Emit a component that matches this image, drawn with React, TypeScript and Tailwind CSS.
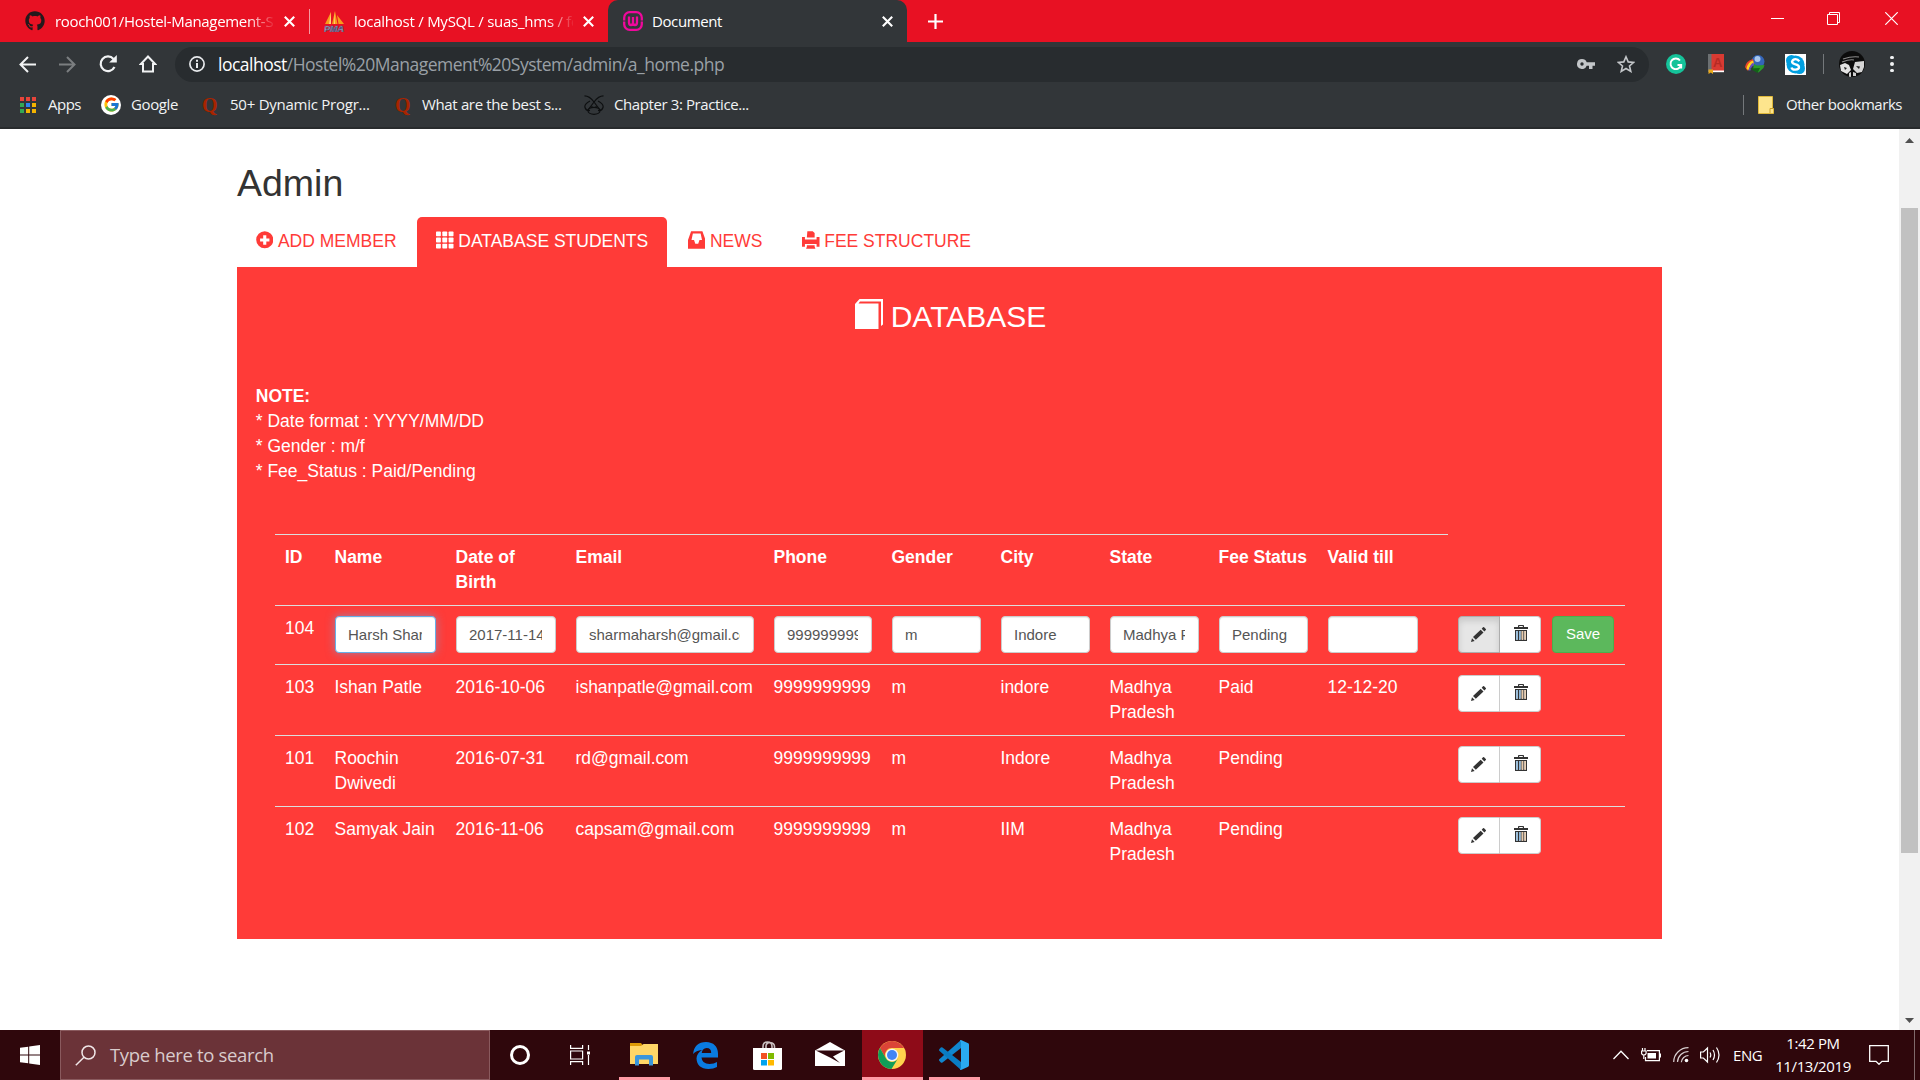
import React from "react";
import { FaGithub } from "react-icons/fa";
import { FcGoogle } from "react-icons/fc";

const ui = "font-['Open_Sans','Noto_Sans',sans-serif]";

/* ---------- page glyphs ---------- */

const PlusSign = () => (
  <svg viewBox="0 0 18 18" className="h-[18px] w-[17.5px] shrink-0" fill="currentColor">
    <path fillRule="evenodd" d="M9 0a8.800 8.800 0 1 0 0 17.600A8.800 8.800 0 0 0 9 0ZM7.4 4.2h3.2v3.2h3.2v3.2h-3.2v3.2H7.4v-3.2H4.2V7.4h3.2Z" />
  </svg>
);
const GridGlyph = () => (
  <svg viewBox="0 0 18 18" className="h-[18px] w-[17.5px] shrink-0" fill="currentColor">
    {[0.2, 6.5, 12.8].map((y) => [0, 6.5, 13].map((x) => <rect key={`${x}-${y}`} x={x} y={y} width="5" height="5" rx="0.8" />))}
  </svg>
);
const InboxGlyph = () => (
  <svg viewBox="0 0 18 18" className="h-[18px] w-[17.5px] shrink-0" fill="currentColor">
    <path fillRule="evenodd" d="M3.200 0h11.600L18 9V18H0V9ZM5 2.400 3.600 9H6.200l1.300 3.800h3L11.800 9h2.600L13 2.400Z" />
  </svg>
);
const PrintGlyph = () => (
  <svg viewBox="0 0 18 18" className="h-[18px] w-[17.5px] shrink-0" fill="currentColor">
    <path d="M5.500 0h5.500L13 1.800V6.500H5ZM0 6h3v2.500h12V6h3v10h-3v-3H3v3H0ZM5 14.500h8v1.500l.8 2H4.200l.8-2Z" />
  </svg>
);
const BookGlyph = () => (
  <svg viewBox="0 0 28 30" className="h-[30px] w-[28px] shrink-0" fill="currentColor">
    <path d="M4.500 0H28v25.500L26 27V2.500H5L3.500 4.500H23.500V30H0V5Z" />
  </svg>
);
const PencilGlyph = () => (
  <svg viewBox="0 0 16 16" className="h-4 w-4" fill="#333">
    <path d="M0 16l1-3.700L3.700 15ZM2 11l7.700-7.300 2.800 2.700L4.800 13.800ZM10.700 2.800l1.300-1.500q.5-.6 1.100 0l1.700 1.700q.5.600 0 1.100l-1.400 1.400Z" />
  </svg>
);
const TrashGlyph = () => (
  <svg viewBox="0 0 14 16" className="h-4 w-[14px]" fill="#333">
    <path fillRule="evenodd" d="M4 2V.8Q4 0 4.800 0h4.400Q10 0 10 .8V2h4v2H0V2ZM5.200 2h3.600V1.100H5.200ZM1 5h12v11H1Zm1.200 1v8.800h1.600V6Zm2.800 0v8.800h1.500V6Zm2.700 0v8.800h1.500V6Zm2.700 0v8.800h1.500V6Z" />
    <path d="M2.300 6h1.500v8.800H2.300ZM5 6h1.500v8.800H5Z" fill="#8cb8dc" />
    <path d="M7.700 6h1.500v8.800H7.700ZM10.400 6h1.400v8.800h-1.400Z" fill="#e8c9a8" />
  </svg>
);

/* ---------- browser chrome ---------- */

const CloseX = ({ className }: { className: string }) => (
  <svg viewBox="0 0 11 11" className={`h-[11px] w-[11px] shrink-0 ${className}`} stroke="#fff" strokeWidth="2.1">
    <path d="M.8.8l9.400 9.400M10.200.8.8 10.200" />
  </svg>
);

const TabStrip = () => (
  <div className={`flex h-[42px] shrink-0 bg-[#e81123] text-[15px] text-white ${ui}`}>
    <div className="flex w-[309px] items-center pl-[25px]">
      <FaGithub className="h-[20px] w-[20px] shrink-0 text-[#24191c]" />
      <div className="ml-[10px] w-[219px] whitespace-nowrap tracking-[-0.32px] [mask-image:linear-gradient(to_right,black_88%,transparent_101%)]">
        rooch001/Hostel-Management-S
      </div>
      <CloseX className="ml-[10px]" />
    </div>
    <div className="flex w-[299px] items-center">
      <div className="h-[25px] w-px bg-[#f59aa1]" />
      <svg viewBox="0 0 21 21" className="ml-[14px] h-[21px] w-[21px] shrink-0">
        <path d="M7 1 1 13h6ZM11 0 8 13h5.500ZM13 4l1.500 9H20Z" fill="#f99c1b" />
        <path d="M7 1 5 13h2ZM11 0v13h-1Z" fill="#ffd27a" />
        <text x="0" y="20.500" fontSize="9" fontWeight="700" fontStyle="italic" fontFamily="Liberation Sans" fill="#c9c9dc" stroke="#55567f" strokeWidth=".7" textLength="20">PMA</text>
      </svg>
      <div className="ml-[9px] w-[219px] whitespace-nowrap tracking-[-0.25px] [mask-image:linear-gradient(to_right,black_88%,transparent_101%)]">
        localhost / MySQL / suas_hms / fe
      </div>
      <CloseX className="ml-[10px]" />
    </div>
    <div className="flex w-[299px] bg-[#323639]">
      <div className="flex-1 rounded-b-[10px] bg-[#e81123]">
        <div className="flex h-full items-center rounded-t-[10px] bg-[#323639] pl-[15px]">
          <svg viewBox="0 0 20 20" className="h-5 w-5 shrink-0" fill="none" stroke="#f0089c" strokeWidth="2.300">
            <rect x="1.200" y="1.200" width="17.600" height="17.600" rx="5.500" />
            <path d="M6 5.500v6q0 2.500 2 2.500t2-2.500V6v5.500q0 2.500 2 2.500t2-2.500v-6" />
            <path d="M0 10h4M16 10h4" stroke="#323639" strokeWidth="1.200" />
          </svg>
          <div className="ml-[9px] w-[220px] tracking-[-0.4px]">Document</div>
          <CloseX className="ml-[10px]" />
        </div>
      </div>
    </div>
    <div className="flex flex-1 items-center">
      <svg viewBox="0 0 15 15" className="ml-[21px] h-[15px] w-[15px]" stroke="#fff" strokeWidth="2.200"><path d="M7.500 0v15M0 7.500h15" /></svg>
      <div className="mb-[5px] ml-auto flex items-center pr-[22px]">
        <div className="h-px w-[13px] bg-white" />
        <svg viewBox="0 0 13 13" className="ml-[43px] h-[13px] w-[13px]" fill="none" stroke="#fff"><path d="M.5 2.500h10v10H.5ZM2.500 2V.5h10v10H11" /></svg>
        <svg viewBox="0 0 13 13" className="ml-[45px] h-[13px] w-[13px]" stroke="#fff" strokeWidth="1.200"><path d="M.3.3l12.400 12.400M12.700.3.3 12.700" /></svg>
      </div>
    </div>
  </div>
);

const Toolbar = () => (
  <div className={`flex h-[44px] shrink-0 items-center bg-[#323639] ${ui}`}>
    <svg viewBox="0 0 17 17" className="ml-[19px] h-[17px] w-[17px]" fill="none" stroke="#f1f3f4" strokeWidth="2"><path d="M17 8.500H1.500M9 1 1.500 8.500 9 16" /></svg>
    <svg viewBox="0 0 17 17" className="ml-[23px] h-[17px] w-[17px]" fill="none" stroke="#7b7e80" strokeWidth="2"><path d="M0 8.500h15.500M8 1l7.500 7.500L8 16" /></svg>
    <svg viewBox="0 0 18 18" className="ml-[23px] h-[18px] w-[18px]" fill="none" stroke="#f1f3f4" strokeWidth="2.200">
      <path d="M15.500 12A7.300 7.300 0 1 1 14.500 4" />
      <path d="M17.800 0v7.600h-7.600Z" fill="#f1f3f4" stroke="none" />
    </svg>
    <svg viewBox="0 0 18 18" className="ml-[22px] h-[18px] w-[18px]" fill="none" stroke="#f1f3f4" strokeWidth="2"><path d="M9 1.500 1.800 9H4v7.600h10V9h2.200Z" /></svg>
    <div className="ml-[18px] flex h-[35px] w-[1474px] items-center rounded-full bg-[#282c2f] pl-[14px]">
      <svg viewBox="0 0 16 16" className="h-4 w-4" fill="none" stroke="#e8eaed" strokeWidth="1.700"><circle cx="8" cy="8" r="7.100" /><path d="M8 7v5M8 3.800v1.900" strokeWidth="2" /></svg>
      <div className="ml-[13px] whitespace-nowrap text-[17.500px] tracking-[-0.51px] text-[#9aa0a6]"><span className="text-white">localhost</span>/Hostel%20Management%20System/admin/a_home.php</div>
      <svg viewBox="0 0 18 10" className="ml-auto h-[10px] w-[18px]" fill="#c3c6c9"><path fillRule="evenodd" d="M5 0a5 5 0 1 0 4.700 6.700H12V10h3.500V6.700H18V3.300H9.700A5 5 0 0 0 5 0Zm0 3.300a1.700 1.700 0 1 1 0 3.400 1.700 1.700 0 0 1 0-3.400Z" /></svg>
      <svg viewBox="0 0 18 18" className="ml-[22px] mr-[14px] h-[18px] w-[18px]" fill="none" stroke="#c3c6c9" strokeWidth="1.600"><path d="m9 1.800 2.200 5.100 5.500.5-4.200 3.600 1.300 5.400L9 13.500l-4.800 2.900L5.500 11 1.300 7.400l5.500-.5Z" /></svg>
    </div>
    <svg viewBox="0 0 20 20" className="ml-[17px] h-5 w-5"><circle cx="10" cy="10" r="10" fill="#15c39a" /><path d="M14 6.500A5.300 5.300 0 1 0 15 11h-3.500M15.200 10.200v4.300" fill="none" stroke="#fff" strokeWidth="1.900" /></svg>
    <svg viewBox="0 0 18 20" className="ml-[21px] h-5 w-[18px]">
      <rect x="1" width="16" height="18" fill="#d93a32" /><rect x="1" width="3.500" height="18" fill="#6c7072" /><path d="M5 16.500h12v1.700H5Z" fill="#fff" />
      <text x="6" y="13" fontSize="13" fontWeight="700" fontFamily="Liberation Sans" fill="#b52a24">A</text>
      <path d="M1.500 15.500H6V20l-2.200-1.500L1.500 20Z" fill="#e9a91c" />
    </svg>
    <svg viewBox="0 0 20 20" className="ml-[20px] h-5 w-5">
      <circle cx="13" cy="7.500" r="6.500" fill="#3465b8" /><circle cx="12.500" cy="5" r="3" fill="#a9c8ee" />
      <path d="M8 5Q1 7 0 13l2.500 4Q3 11 9 9.500Z" fill="#e8442a" /><path d="M8 6.500Q3 8 1.500 14.500l2 2Q4.500 11.500 9 10Z" fill="#ffd21f" /><path d="M8.500 8.500Q5 10 3.500 16.500h2Q6 12.500 9 11Z" fill="#6a4fc0" />
      <path d="M9 10l3 1.500L19.500 11l-1 3-5 4.500L8 15Z" fill="#2b9a2b" /><path d="M5 14.500l10-.5-2.500 5Z" fill="#14611a" />
    </svg>
    <svg viewBox="0 0 21 21" className="ml-[20px] h-[21px] w-[21px]"><rect width="21" height="21" fill="#fff" /><circle cx="10.500" cy="10.500" r="9" fill="#009fe0" /><circle cx="6.500" cy="6.500" r="5.500" fill="#009fe0" /><circle cx="14.500" cy="14.500" r="5.500" fill="#009fe0" /><path d="M14.300 7.300Q13 5.200 10.500 5.200T7 7.600q0 2 3.500 2.700t3.500 2.900-3.500 2.400-4-2.200" fill="none" stroke="#fff" strokeWidth="2.300" /></svg>
    <div className="ml-[17px] h-5 w-px bg-[#74787b]" />
    <svg viewBox="0 0 26 26" className="ml-[15px] h-[26px] w-[26px] rounded-full">
      <rect width="26" height="26" fill="#0c0c0c" />
      <path d="M1 14l5-2 4 2 2 5-4 4-6-3Z" fill="#e3e3e3" /><path d="M16 11l9-1v6l-2 5-5 1-4-4Z" fill="#d6d6d6" />
      <path d="M4 8q9-3 16-2M3 11q8-3 12-2" stroke="#8b8b8b" strokeWidth="1.200" fill="none" />
      <path d="M17 15l4 .5-1 2.500ZM5 16l3 1-2 2Z" fill="#222" /><path d="M10 22l2-1v5h-2ZM14 21l3 1v3h-3Z" fill="#cfcfcf" />
    </svg>
    <div className="ml-[25px] flex flex-col gap-[3px]">
      <div className="h-[3.500px] w-[3.500px] rounded-full bg-[#f1f3f4]" />
      <div className="h-[3.500px] w-[3.500px] rounded-full bg-[#f1f3f4]" />
      <div className="h-[3.500px] w-[3.500px] rounded-full bg-[#f1f3f4]" />
    </div>
  </div>
);

const appDots = ["#e8443a", "#e8443a", "#e8443a", "#34a853", "#2d84f0", "#f5b400", "#34a853", "#f5b400", "#f5b400"];

const Quora = () => <div className="w-[15px] text-center font-['Liberation_Serif',serif] text-[20px] leading-[20px] font-bold text-[#a82400]">Q</div>;

const Bookmarks = () => (
  <div className={`flex h-[43px] shrink-0 items-center border-b-2 border-[#282b2d] bg-[#323639] pb-[4px] text-[15px] whitespace-nowrap text-[#f1f3f4] ${ui}`}>
    <div className="ml-[20px] grid w-[16px] grid-cols-3 gap-[2px]">
      {appDots.map((c, i) => <div key={i} className="h-[4px] w-[4px]" style={{ backgroundColor: c }} />)}
    </div>
    <div className="ml-[12px] w-[53px] tracking-[-0.5px]">Apps</div>
    <div className="flex h-5 w-5 items-center justify-center rounded-full bg-white"><FcGoogle className="h-[17px] w-[17px]" /></div>
    <div className="ml-[10px] w-[71px] tracking-[-0.4px]">Google</div>
    <Quora />
    <div className="ml-[13px] w-[165px] tracking-[-0.25px]">50+ Dynamic Progr...</div>
    <Quora />
    <div className="ml-[12px] w-[162px] tracking-[-0.35px]">What are the best s...</div>
    <svg viewBox="0 0 20 20" className="h-5 w-5" fill="none" stroke="#0d0f10" strokeWidth="1.200">
      <path d="M.5.8q5 0 9.500 6.200Q14.500.8 19.500.8M10 7 4 15M10 7l6 8M6 6Q0 9 1 12.500t5 3M14 6q6 3 5 6.500t-5 3M7 12h2M11 12h2" /><ellipse cx="10" cy="15.800" rx="6" ry="3.500" />
    </svg>
    <div className="ml-[10px] tracking-[-0.4px]">Chapter 3: Practice...</div>
    <div className="ml-auto h-5 w-px bg-[#74787b]" />
    <svg viewBox="0 0 16 18" className="ml-[14px] h-[18px] w-4"><path d="M.5.500h14V12l1 .5v5H.5Z" fill="#fde58d" stroke="#e0b93a" /><path d="M12 17v-4.500h3.500" fill="none" stroke="#caa02a" /></svg>
    <div className="ml-[12px] w-[134px] tracking-[-0.48px]">Other bookmarks</div>
  </div>
);

/* ---------- page ---------- */

const tabs = [
  { label: "ADD MEMBER", icon: <PlusSign />, active: false },
  { label: "DATABASE STUDENTS", icon: <GridGlyph />, active: true },
  { label: "NEWS", icon: <InboxGlyph />, active: false },
  { label: "FEE STRUCTURE", icon: <PrintGlyph />, active: false },
];

const columns = ["ID", "Name", "Date of Birth", "Email", "Phone", "Gender", "City", "State", "Fee Status", "Valid till"];
const widths = [49.5, 121, 120, 198, 118, 109, 109, 109, 109, 130.5, 177];

const editing = ["Harsh Sharma", "2017-11-14", "sharmaharsh@gmail.com", "9999999999", "m", "Indore", "Madhya Pradesh", "Pending", ""];
const rows = [
  ["103", "Ishan Patle", "2016-10-06", "ishanpatle@gmail.com", "9999999999", "m", "indore", "Madhya Pradesh", "Paid", "12-12-20"],
  ["101", "Roochin Dwivedi", "2016-07-31", "rd@gmail.com", "9999999999", "m", "Indore", "Madhya Pradesh", "Pending", ""],
  ["102", "Samyak Jain", "2016-11-06", "capsam@gmail.com", "9999999999", "m", "IIM", "Madhya Pradesh", "Pending", ""],
];

const Actions = ({ active = false }: { active?: boolean }) => (
  <div className="flex">
    <button className={`flex h-[37px] w-[42px] items-center justify-center rounded-l-[4px] border pb-[2px] ${active ? "border-[#adadad] bg-[#e6e6e6] shadow-[inset_0_4px_6px_rgba(0,0,0,0.125)]" : "border-[#ccc] bg-white"}`}><PencilGlyph /></button>
    <button className="flex h-[37px] w-[41px] items-center justify-center rounded-r-[4px] border border-l-0 border-[#ccc] bg-white pb-[3px] pl-[1px]"><TrashGlyph /></button>
    {active && <button className="ml-[11px] h-[37px] w-[62px] rounded-[4px] border border-[#4cae4c] bg-[#5cb85c] pb-[3px] text-[15px]">Save</button>}
  </div>
);

const cell = "border-t border-[#ddd] p-[10px] pb-0 align-top";

const Page = () => (
  <div className="flex min-h-0 flex-1 bg-white font-['Liberation_Sans',Arial,sans-serif] text-[17.500px] leading-[25px]">
    <div className="flex-1 pl-[237px]">
      <h2 className="pt-[34px] text-[37.500px] leading-[41px] text-[#333]">Admin</h2>
      <div className="mt-[13px] flex gap-[2.500px]">
        {tabs.map((t) => (
          <div key={t.label} className={`flex h-[50px] items-center rounded-t-[5px] pr-[18.300px] pl-[18.750px] whitespace-nowrap ${t.active ? "bg-[#ff3b38] text-white" : "text-[#ff3b38]"}`}>
            <span className="mr-[4.700px] mb-[5px]">{t.icon}</span>
            <span className="pb-[2px]">{t.label}</span>
          </div>
        ))}
      </div>
      <div className="h-[672px] w-[1425px] bg-[#ff3b38] text-white">
        <h3 className="flex justify-center pt-[32px] pl-[2px] text-[30px] leading-[33px]">
          <span className="mr-[8px]"><BookGlyph /></span>
          <span className="pt-[1px] pb-[1px]">DATABASE</span>
        </h3>
        <div className="mt-[50px] pl-[18.750px]">
          <b>NOTE:</b><br />* Date format : YYYY/MM/DD<br />* Gender : m/f<br />* Fee_Status : Paid/Pending
        </div>
        <table className="mt-[50px] ml-[38px] w-[1350px] table-fixed border-separate border-spacing-0 text-left">
          <colgroup>{widths.map((w, i) => <col key={i} style={{ width: w }} />)}</colgroup>
          <tbody>
            <tr className="h-[71px]">
              {columns.map((c) => <th key={c} className={`${cell} ${c === "Fee Status" ? "pr-0 whitespace-nowrap" : ""}`}>{c}</th>)}
              <td />
            </tr>
            <tr className="h-[59px]">
              <td className={cell}>104</td>
              {editing.map((v, i) => (
                <td key={i} className={cell}>
                  <input
                    readOnly
                    value={v}
                    className={`block h-[37px] rounded-[4px] border bg-white px-[12.500px] py-0 text-[15px] text-[#555] outline-none ${i === 8 ? "w-[90px]" : "w-full"} ${i === 0 ? "border-[#66afe9] shadow-[inset_0_1px_1px_rgba(0,0,0,0.075),0_0_10px_rgba(102,175,233,0.6)]" : "border-[#ccc] shadow-[inset_0_1px_1px_rgba(0,0,0,0.075)]"}`}
                  />
                </td>
              ))}
              <td className={`${cell} pr-0`}><Actions active /></td>
            </tr>
            {rows.map((r) => (
              <tr key={r[0]} className="h-[71px]">
                {r.map((v, i) => <td key={i} className={`${cell} ${i === 1 || i === 3 || i === 4 ? "pr-0" : ""}`}><div className={i === 1 ? "w-[102px]" : ""}>{v}</div></td>)}
                <td className={cell}><Actions /></td>
              </tr>
            ))}
          </tbody>
        </table>
      </div>
    </div>
    <div className="flex w-[21px] flex-col items-center bg-[#f1f1f1]">
      <svg viewBox="0 0 9 5" className="mt-[9px] h-[5px] w-[9px]" fill="#505050"><path d="M4.500 0 9 5H0Z" /></svg>
      <div className="mt-[65px] h-[645px] w-[17px] bg-[#c1c1c1]" />
      <svg viewBox="0 0 9 5" className="mt-auto mb-[7px] h-[5px] w-[9px]" fill="#505050"><path d="M4.500 5 9 0H0Z" /></svg>
    </div>
  </div>
);

/* ---------- taskbar ---------- */

const Taskbar = () => (
  <div className={`flex h-[50px] shrink-0 items-center bg-[#2f070c] text-white ${ui}`}>
    <div className="flex w-[60px] justify-center">
      <svg viewBox="0 0 20 20" className="h-5 w-5" fill="#fff"><path d="M0 2.800 8.200 1.700v7.800H0ZM9.200 1.500 20 0v9.500H9.200ZM0 10.500h8.200v7.800L0 17.200ZM9.200 10.500H20V20L9.200 18.500Z" /></svg>
    </div>
    <div className="flex h-full w-[430px] items-center border border-[#8a5a5e] bg-[#6b3338]">
      <svg viewBox="0 0 21 21" className="ml-[14px] h-[21px] w-[21px]" fill="none" stroke="#f0e6e7" strokeWidth="1.500"><circle cx="13.500" cy="7.500" r="6.500" /><path d="M9 12.200.8 20.300" /></svg>
      <div className="ml-[14px] text-[18.500px] tracking-[-0.34px] text-[#d9cbcc]">Type here to search</div>
    </div>
    <div className="flex w-[60px] justify-center"><div className="h-[20px] w-[20px] rounded-full border-[3px] border-white" /></div>
    <div className="flex w-[60px] justify-center">
      <svg viewBox="0 0 20 20" className="h-5 w-5" fill="none" stroke="#fff" strokeWidth="1.200"><path d="M.6 0v3.400h12V0M.6 6h12v8H.6ZM.6 20v-3.400h12V20M18.500 0v5M18.500 10v10" /><path d="M17 6.500h3v3h-3Z" fill="#fff" stroke="none" /></svg>
    </div>
    <div className="ml-[9px] flex h-full w-[51px] items-center border-b-[3px] border-[#ff9aa5] pt-[1px] pl-[11px]">
      <svg viewBox="0 0 28 24" className="h-6 w-7"><path d="M0 1h11l2 2.500V6H0Z" fill="#dd9a06" /><path d="M0 4h11l2.500-2H28v20H0Z" fill="#ffd667" /><path d="M5 23.500v-8.500Q5 13 7 13h14q2 0 2 2v8.500h-4V17.500H9v6Z" fill="#3a96dd" /></svg>
    </div>
    <div className="ml-[23px] w-[25px]">
      <svg viewBox="0 0 25 27" className="h-[27px] w-[25px]"><path d="M0 12Q1.500 0 13 0q11.500.5 12 11.500V15.500H8.500q.5 6.500 8 6.500 4.500 0 7.500-2v5Q20.500 27 15.500 27 4 26.500 3.500 16.500 3.800 11 9 8q-6 .5-9 4ZM8.700 11h9.500q0-5-4.600-5-4.400.5-4.900 5Z" fill="#0a7be0" /></svg>
    </div>
    <div className="ml-[35px] w-[29px]">
      <svg viewBox="0 0 29 29" className="h-[29px] w-[29px]"><path d="M10 8V5.500Q10 1 14.500 1T19 5.500V8M13 8V5q0-3 4-3.500 4.500.5 4.500 4V8" fill="none" stroke="#c9bfc0" strokeWidth="1.600" /><path d="M0 7h29v20.500q0 1.500-1.500 1.500h-26Q0 29 0 27.500Z" fill="#fff" /><path d="M8 12h6v6H8Z" fill="#f25022" /><path d="M15 12h6v6h-6Z" fill="#7fba00" /><path d="M8 19h6v5.500H8Z" fill="#00a4ef" /><path d="M15 19h6v5.500h-6Z" fill="#ffb900" /></svg>
    </div>
    <div className="ml-[33px] w-[30px] pb-[3px]">
      <svg viewBox="0 0 30 24" className="h-6 w-[30px]"><path d="M0 8.500 15 0l15 8.500V24H0Z" fill="#fff" /><path d="M.8 8.500h28.400L18 14.500l7 6.500-10-5.500Z" fill="#2f070c" /></svg>
    </div>
    <div className="ml-[17px] flex h-full w-[61px] items-center border-b-[3px] border-[#ff9aa5] bg-[#8e0b18] pt-[2px] pl-[16px]">
      <svg viewBox="0 0 28 28" className="h-7 w-7">
        <circle cx="14" cy="14" r="14" fill="#ffd24d" />
        <path d="M1.900 7A14 14 0 0 1 26.100 7H14a7 7 0 0 0-6.100 10.500Z" fill="#db4437" />
        <path d="M1.900 7A14 14 0 0 0 13.500 28l6.500-10.500a7 7 0 0 1-12 0Z" fill="#0f9d58" />
        <circle cx="14" cy="14" r="6.300" fill="#f5f5f5" /><circle cx="14" cy="14" r="5" fill="#4285f4" />
      </svg>
    </div>
    <div className="ml-[6px] flex h-full w-[51px] items-center border-b-[3px] border-[#ff9aa5] pt-[2px] pl-[10px]">
      <svg viewBox="0 0 30 30" className="h-[30px] w-[30px]"><path d="M22 0v8L3.500 22.500q-1 .5-1.700 0L.3 20.800q-.6-.8 0-1.500Z" fill="#1186cf" /><path d="M22 30v-8L3.500 7.500q-1-.5-1.700 0L.3 9.200q-.6.800 0 1.500Z" fill="#0a7cc4" /><path d="M22 0l7.200 3.300q.8.500.8 1.400v20.600q0 .9-.8 1.400L22 30q-1 0-1-1 1-.5 1-1.500v-25Q22 1.500 21 1q0-1 1-1Z" fill="#2aa9f2" /></svg>
    </div>
    <div className="ml-auto flex h-full items-center">
      <svg viewBox="0 0 16 10" className="h-[10px] w-4" fill="none" stroke="#fff" strokeWidth="1.300"><path d="M.5 9 8 1.200 15.500 9" /></svg>
      <svg viewBox="0 0 20 14" className="ml-[12px] h-[14px] w-5" fill="none" stroke="#fff" strokeWidth="1.200"><path d="M6 2.600h12.400v10H4.500V9M19.500 5.500v4" /><path d="M6.500 5h8.500v5.500H6.500Z" fill="#fff" stroke="none" /><path d="M1.500 0v3M4 0v3M.6 3h4.500v2.500Q4.500 7 2.800 7T.6 5.500ZM2.800 7v4" /></svg>
      <svg viewBox="0 0 16 16" className="ml-[12px] h-4 w-4" fill="none" stroke="#d8cfd0" strokeWidth="1.200"><path d="M.7 15A14.500 14.500 0 0 1 15.500.7M4.500 15A11 11 0 0 1 15.500 4.500M8.300 15.200A7.500 7.500 0 0 1 15.500 8.500" /><circle cx="13.500" cy="13.500" r="1.800" fill="#fff" stroke="none" /></svg>
      <svg viewBox="0 0 20 18" className="ml-[11px] h-[18px] w-5" fill="none" stroke="#fff" strokeWidth="1.200"><path d="M.6 6h2.800L7.500 2v14L3.400 12H.6ZM10 6.500q1.500 2.500 0 5M13 4q3 5 0 10M16.500 1.500q5 7.500 0 15" /></svg>
      <div className="ml-[13px] w-[30px] text-[15px] tracking-[-0.4px] whitespace-nowrap">ENG</div>
      <div className="ml-[10px] flex w-[80px] flex-col items-center text-[15px] leading-[23px] tracking-[-0.4px] whitespace-nowrap">
        <span>1:42 PM</span>
        <span>11/13/2019</span>
      </div>
      <svg viewBox="0 0 20 20" className="ml-[16px] h-5 w-5" fill="none" stroke="#fff" strokeWidth="1.300"><path d="M.7.700h18.600v15.600H13l-3 3-3-3H.7Z" /></svg>
      <div className="ml-[25px] h-full w-px bg-[#806a6c]" />
      <div className="w-[5px]" />
    </div>
  </div>
);

export default function App() {
  return (
    <div className="flex h-[1080px] w-[1920px] flex-col overflow-hidden">
      <TabStrip />
      <Toolbar />
      <Bookmarks />
      <Page />
      <Taskbar />
    </div>
  );
}
